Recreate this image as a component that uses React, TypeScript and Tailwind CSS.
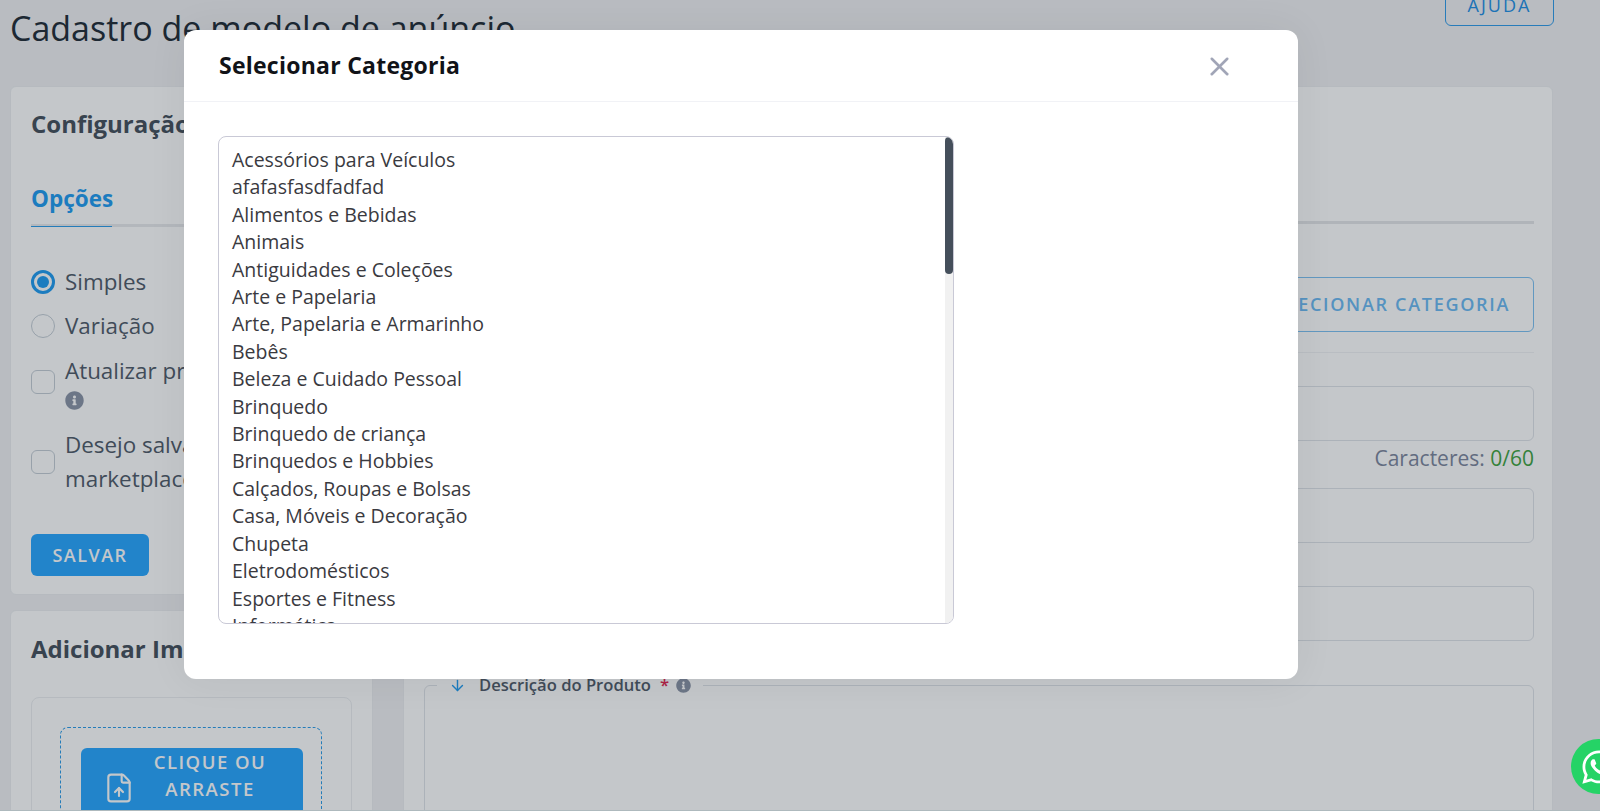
import React from "react";
import { ArrowDown, FileUp, X } from "lucide-react";
import { FaInfoCircle, FaWhatsapp } from "react-icons/fa";

const categories = [
   "Acessórios para Veículos",
   "afafasfasdfadfad",
   "Alimentos e Bebidas",
   "Animais",
   "Antiguidades e Coleções",
   "Arte e Papelaria",
   "Arte, Papelaria e Armarinho",
   "Bebês",
   "Beleza e Cuidado Pessoal",
   "Brinquedo",
   "Brinquedo de criança",
   "Brinquedos e Hobbies",
   "Calçados, Roupas e Bolsas",
   "Casa, Móveis e Decoração",
   "Chupeta",
   "Eletrodomésticos",
   "Esportes e Fitness",
   "Informática",
   "Instrumentos Musicais",
   "Joias e Relógios",
];

const Input = ({ className = "" }: { className?: string }) => (
   <div className={`h-[55px] rounded-md border border-[#dfe3e8] ${className}`} />
);

export default function App() {
   return (
      <div className="relative h-[811px] overflow-hidden bg-[#f0f0f3] font-['Open_Sans',sans-serif] text-[#4f5a68]">
         {/* Page behind the modal */}
         <div className="pl-[10px]">
            <div className="flex h-[86px] items-start justify-between pr-[46px]">
               <h1 className="mt-[5px] text-[34px] leading-[46px] text-[#212b36]">
                  Cadastro de modelo de anúncio
               </h1>
               <button className="-mt-[16px] h-[42px] w-[109px] rounded-md border border-[#2f9bea] text-[18px] tracking-[2px] text-[#1f8fe5]">
                  AJUDA
               </button>
            </div>

            <div className="flex gap-[30px] pr-[47px]">
               {/* Left column */}
               <div className="flex w-[363px] flex-col gap-[15px]">
                  <div className="h-[509px] rounded-md border border-[#eceef1] bg-white px-[20px] pt-[19px]">
                     <h2 className="text-[24px] font-bold leading-[36px] text-[#454f5b]">
                        Configuração de produto
                     </h2>
                     <div className="mt-[39px] border-b-[3px] border-[#e8eaed]">
                        <div className="-mb-[3px] h-[46px] w-[81px] border-b border-[#2b9be8] text-[22.5px] font-bold leading-[36px] text-[#1f9bf0]">
                           Opções
                        </div>
                     </div>
                     <div className="mt-[33px] flex items-center gap-[10px] text-[22.4px] leading-[44px]">
                        <span className="flex h-[24px] w-[24px] items-center justify-center rounded-full border-[3px] border-[#1f9bf0]">
                           <span className="h-[12px] w-[12px] rounded-full bg-[#1f9bf0]" />
                        </span>
                        Simples
                     </div>
                     <div className="flex items-center gap-[10px] text-[22.4px] leading-[44px]">
                        <span className="h-[24px] w-[24px] rounded-full border border-[#c4cdd5] bg-white" />
                        Variação
                     </div>
                     <div className="mt-[6px] flex items-center gap-[10px] text-[22.4px] leading-[33px]">
                        <span className="h-[24px] w-[24px] shrink-0 rounded-md border border-[#c4cdd5] bg-white" />
                        <div>
                           Atualizar produtos
                           <FaInfoCircle className="mt-[4px] h-[19px] w-[19px] text-[#8a93a6]" />
                        </div>
                     </div>
                     <div className="mt-[18px] flex items-center gap-[10px] text-[22.4px] leading-[34px]">
                        <span className="h-[24px] w-[24px] shrink-0 rounded-md border border-[#c4cdd5] bg-white" />
                        <div>
                           Desejo salvar para
                           <br />
                           marketplaces
                        </div>
                     </div>
                     <button className="mt-[38px] h-[42px] w-[118px] rounded-md bg-[#27a6ff] text-[18px] font-semibold tracking-[1.5px] text-white">
                        SALVAR
                     </button>
                  </div>

                  <div className="h-[300px] rounded-md border border-[#eceef1] bg-white px-[20px] pt-[20px]">
                     <h2 className="text-[24px] font-bold leading-[36px] text-[#454f5b]">
                        Adicionar Imagens
                     </h2>
                     <div className="mt-[30px] h-[200px] rounded-lg border border-[#eceef1] pl-[28px] pr-[29px] pt-[29px]">
                        <div className="h-[150px] rounded-lg border border-dashed border-[#2b9be8] px-[20px] pt-[20px]">
                           <button className="flex h-[100px] w-[222px] items-start rounded-md bg-[#27a6ff] pl-[22px] text-white">
                              <FileUp className="mt-[24px] h-[32px] w-[32px] shrink-0" strokeWidth={1.6} />
                              <span className="w-[150px] text-center text-[18.5px] font-semibold leading-[27px] tracking-[1.5px]">
                                 CLIQUE OU
                                 <br />
                                 ARRASTE
                                 <br />
                                 AQUI
                              </span>
                           </button>
                        </div>
                     </div>
                  </div>
               </div>

               {/* Right column */}
               <div className="h-[740px] flex-1 rounded-md border border-[#eceef1] bg-white px-[20px] pr-[18px]">
                  <div className="h-[137px] border-b-[3px] border-[#e4e6e9]" />
                  <div className="mt-[53px] flex justify-end">
                     <button className="h-[55px] rounded-md border border-[#7cc0f2] px-[23px] text-[18px] font-semibold tracking-[1.7px] text-[#6bb9f2]">
                        SELECIONAR CATEGORIA
                     </button>
                  </div>
                  <div className="mt-[20px] border-t border-[#f1f2f4]" />
                  <Input className="mt-[33px]" />
                  <div className="h-[47px] pt-[2px] text-right text-[21px] leading-[30px] text-[#7c869c]">
                     Caracteres: <span className="text-[#3fa33f]">0/60</span>
                  </div>
                  <Input />
                  <Input className="mt-[43px]" />
                  <fieldset className="mt-[32px] h-[200px] rounded-md border border-[#dfe3e8] pl-[12px]">
                     <legend className="flex items-center px-[12px] text-[16.6px] font-semibold leading-[24px]">
                        <ArrowDown className="mr-[13px] h-[17px] w-[17px] text-[#1f9bf0]" strokeWidth={2} />
                        Descrição do Produto
                        <span className="ml-[9px] mr-[7px] text-[#e0234e]">*</span>
                        <FaInfoCircle className="h-[15px] w-[15px] text-[#8a93a6]" />
                     </legend>
                  </fieldset>
               </div>
            </div>
         </div>

         {/* Backdrop */}
         <div className="absolute inset-0 bg-[#14202c]/25" />

         {/* Modal */}
         <div className="absolute left-[184px] top-[30px] h-[649px] w-[1114px] rounded-xl bg-white shadow-[0_0_40px_rgba(0,0,0,0.06)]">
            <div className="flex h-[72px] items-center justify-between border-b border-[#f1f2f6] pl-[35px] pr-[63px]">
               <h3 className="text-[23px] font-bold tracking-[0.25px] text-[#111318]">
                  Selecionar Categoria
               </h3>
               <X className="mt-[2px] h-[31px] w-[31px] text-[#a1a5b7]" strokeWidth={2} />
            </div>
            <div className="pl-[34px] pt-[34px]">
               <div className="relative h-[488px] w-[736px] overflow-hidden rounded-lg border border-[#c9c9d6] pl-[13px] pt-[9px] text-[19.5px] leading-[27.4px] text-[#3a3a3f]">
                  {categories.map((category) => (
                     <div key={category}>{category}</div>
                  ))}
                  <div className="absolute bottom-0 right-0 top-0 w-[8px] bg-[#f1f1f1]">
                     <div className="h-[137px] rounded-full bg-[#454f5b]" />
                  </div>
               </div>
            </div>
         </div>

         {/* WhatsApp */}
         <div className="absolute left-[1571px] top-[739px] flex h-[55px] w-[55px] items-center justify-center rounded-full bg-[#25d366]">
            <FaWhatsapp className="h-[38px] w-[38px] text-white" />
         </div>
         <div className="absolute bottom-0 left-0 right-0 h-px bg-[#aeb9bd]" />
      </div>
   );
}
